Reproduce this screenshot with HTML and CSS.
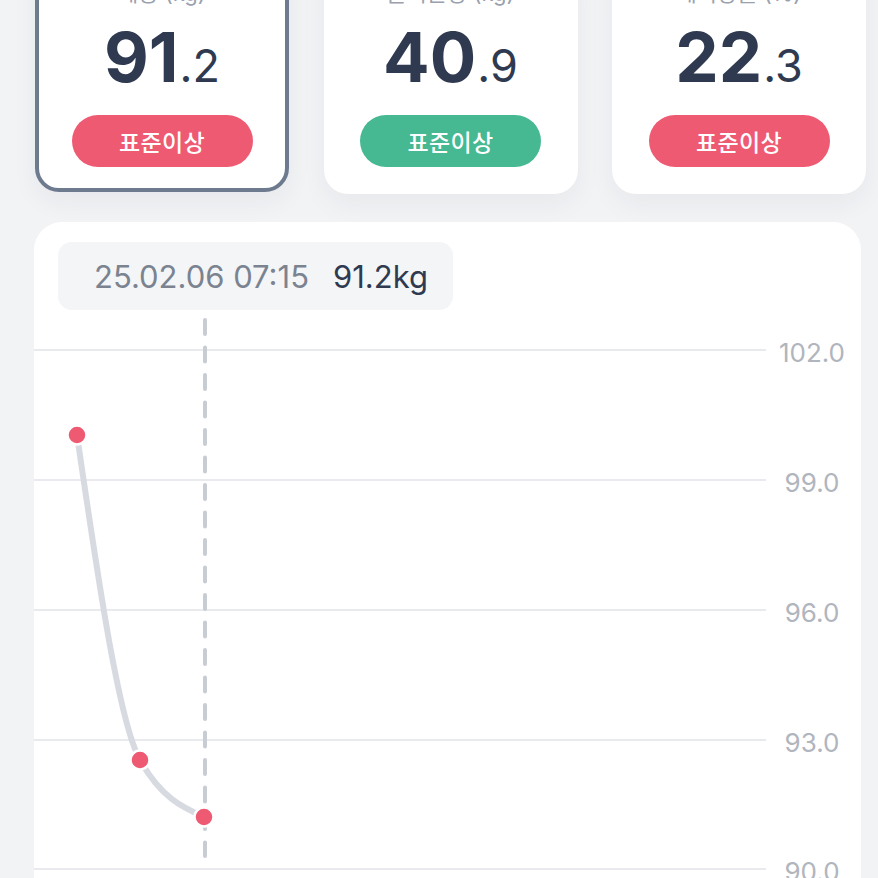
FILE: index.html
```html
<!DOCTYPE html>
<html lang="ko">
<head>
<meta charset="utf-8">
<title>체성분</title>
<link rel="stylesheet" href="styles.css">
</head>
<body>
<div class="page">
  <div class="cards">
    <div class="card card-active">
      <div class="label">체중 (kg)</div>
      <div class="value"><span class="int">91</span><span class="dec">.2</span></div>
      <div class="badge badge-red">표준이상</div>
    </div>
    <div class="card">
      <div class="label">골격근량 (kg)</div>
      <div class="value"><span class="int">40</span><span class="dec">.9</span></div>
      <div class="badge badge-green">표준이상</div>
    </div>
    <div class="card">
      <div class="label">체지방률 (%)</div>
      <div class="value"><span class="int">22</span><span class="dec">.3</span></div>
      <div class="badge badge-red">표준이상</div>
    </div>
  </div>

  <div class="chart-card">
    <div class="tooltip">
      <span class="tip-date">25.02.06 07:15</span>
      <span class="tip-value">91.2kg</span>
    </div>
    <svg class="chart" width="827" height="568" viewBox="0 0 827 568">
      <g class="grid">
        <line x1="0" y1="40" x2="732" y2="40"/>
        <line x1="0" y1="170" x2="732" y2="170"/>
        <line x1="0" y1="300" x2="732" y2="300"/>
        <line x1="0" y1="430" x2="732" y2="430"/>
        <line x1="0" y1="559" x2="732" y2="559"/>
      </g>
      <g class="ylabels">
        <text x="778" y="52">102.0</text>
        <text x="778" y="182">99.0</text>
        <text x="778" y="312">96.0</text>
        <text x="778" y="442">93.0</text>
        <text x="778" y="571">90.0</text>
      </g>
      <line class="cursor" x1="171" y1="10" x2="171" y2="546"/>
      <path class="series" d="M43,125 C64,269 85,412.6 106,450 C127.3,488 148.7,497.5 170,507"/>
      <g class="dots">
        <circle cx="43" cy="125" r="9.5"/>
        <circle cx="106" cy="450" r="9.5"/>
        <circle cx="170" cy="507" r="9.5"/>
      </g>
    </svg>
  </div>
</div>
</body>
</html>
```
FILE: styles.css
```css
* { box-sizing: border-box; }
html, body {
  margin: 0;
  padding: 0;
  background: #f2f3f5;
  overflow: hidden;
  font-family: Inter, "Noto Sans CJK KR", "Noto Sans", sans-serif;
}
.page {
  width: 878px;
  height: 878px;
  overflow: hidden;
}
.cards {
  display: grid;
  grid-template-columns: repeat(3, 254px);
  column-gap: 34.5px;
  margin: -42px 0 0 35px;
  align-items: start;
}
.card {
  height: 236px;
  background: #fff;
  border: 4px solid transparent;
  border-radius: 24px;
  padding-top: 16px;
  display: flex;
  flex-direction: column;
  align-items: center;
  box-shadow: 0 10px 26px rgba(30, 40, 60, 0.05);
}
.card-active {
  height: 234px;
  border-color: #6e7b8f;
}
.label {
  height: 30px;
  line-height: 30px;
  font-size: 22px;
  color: #9aa1ad;
}
.value {
  margin-top: 9px;
  height: 80px;
  line-height: 80px;
  color: #2f3a50;
  white-space: nowrap;
}
.int {
  font-size: 69px;
  font-weight: 700;
}
.dec {
  font-size: 45px;
  font-weight: 400;
  margin-left: 1px;
}
.badge {
  margin-top: 18px;
  width: 181px;
  height: 52px;
  border-radius: 26px;
  color: #fff;
  font-size: 23px;
  font-weight: 500;
  display: flex;
  align-items: center;
  justify-content: center;
  letter-spacing: 0.3px;
}
.badge-red { background: #ef5a73; }
.badge-green { background: #46b892; }

.chart-card {
  margin: 28px 0 0 34px;
  width: 827px;
  height: 700px;
  background: #fff;
  border-radius: 28px 28px 0 0;
  padding-top: 20px;
}
.tooltip {
  margin-left: 24px;
  width: 395px;
  height: 68px;
  background: #f4f5f7;
  border-radius: 14px;
  display: flex;
  align-items: center;
  gap: 24px;
  padding-left: 36px;
  font-size: 31px;
  white-space: nowrap;
}
.tip-date { color: #7b8390; }
.tip-value { color: #2f3a50; }
.chart { display: block; }
.grid line {
  stroke: #e8eaee;
  stroke-width: 2;
}
.ylabels text {
  fill: #b0b5be;
  font-size: 26px;
  text-anchor: middle;
  font-family: Inter, sans-serif;
}
.cursor {
  stroke: #c8ccd3;
  stroke-width: 4;
  stroke-linecap: round;
  stroke-dasharray: 14 13.5;
}
.series {
  fill: none;
  stroke: #d7dbe1;
  stroke-width: 6;
  stroke-linecap: round;
}
.dots circle {
  fill: #ef5a73;
  stroke: #fff;
  stroke-width: 2.5;
}
```
